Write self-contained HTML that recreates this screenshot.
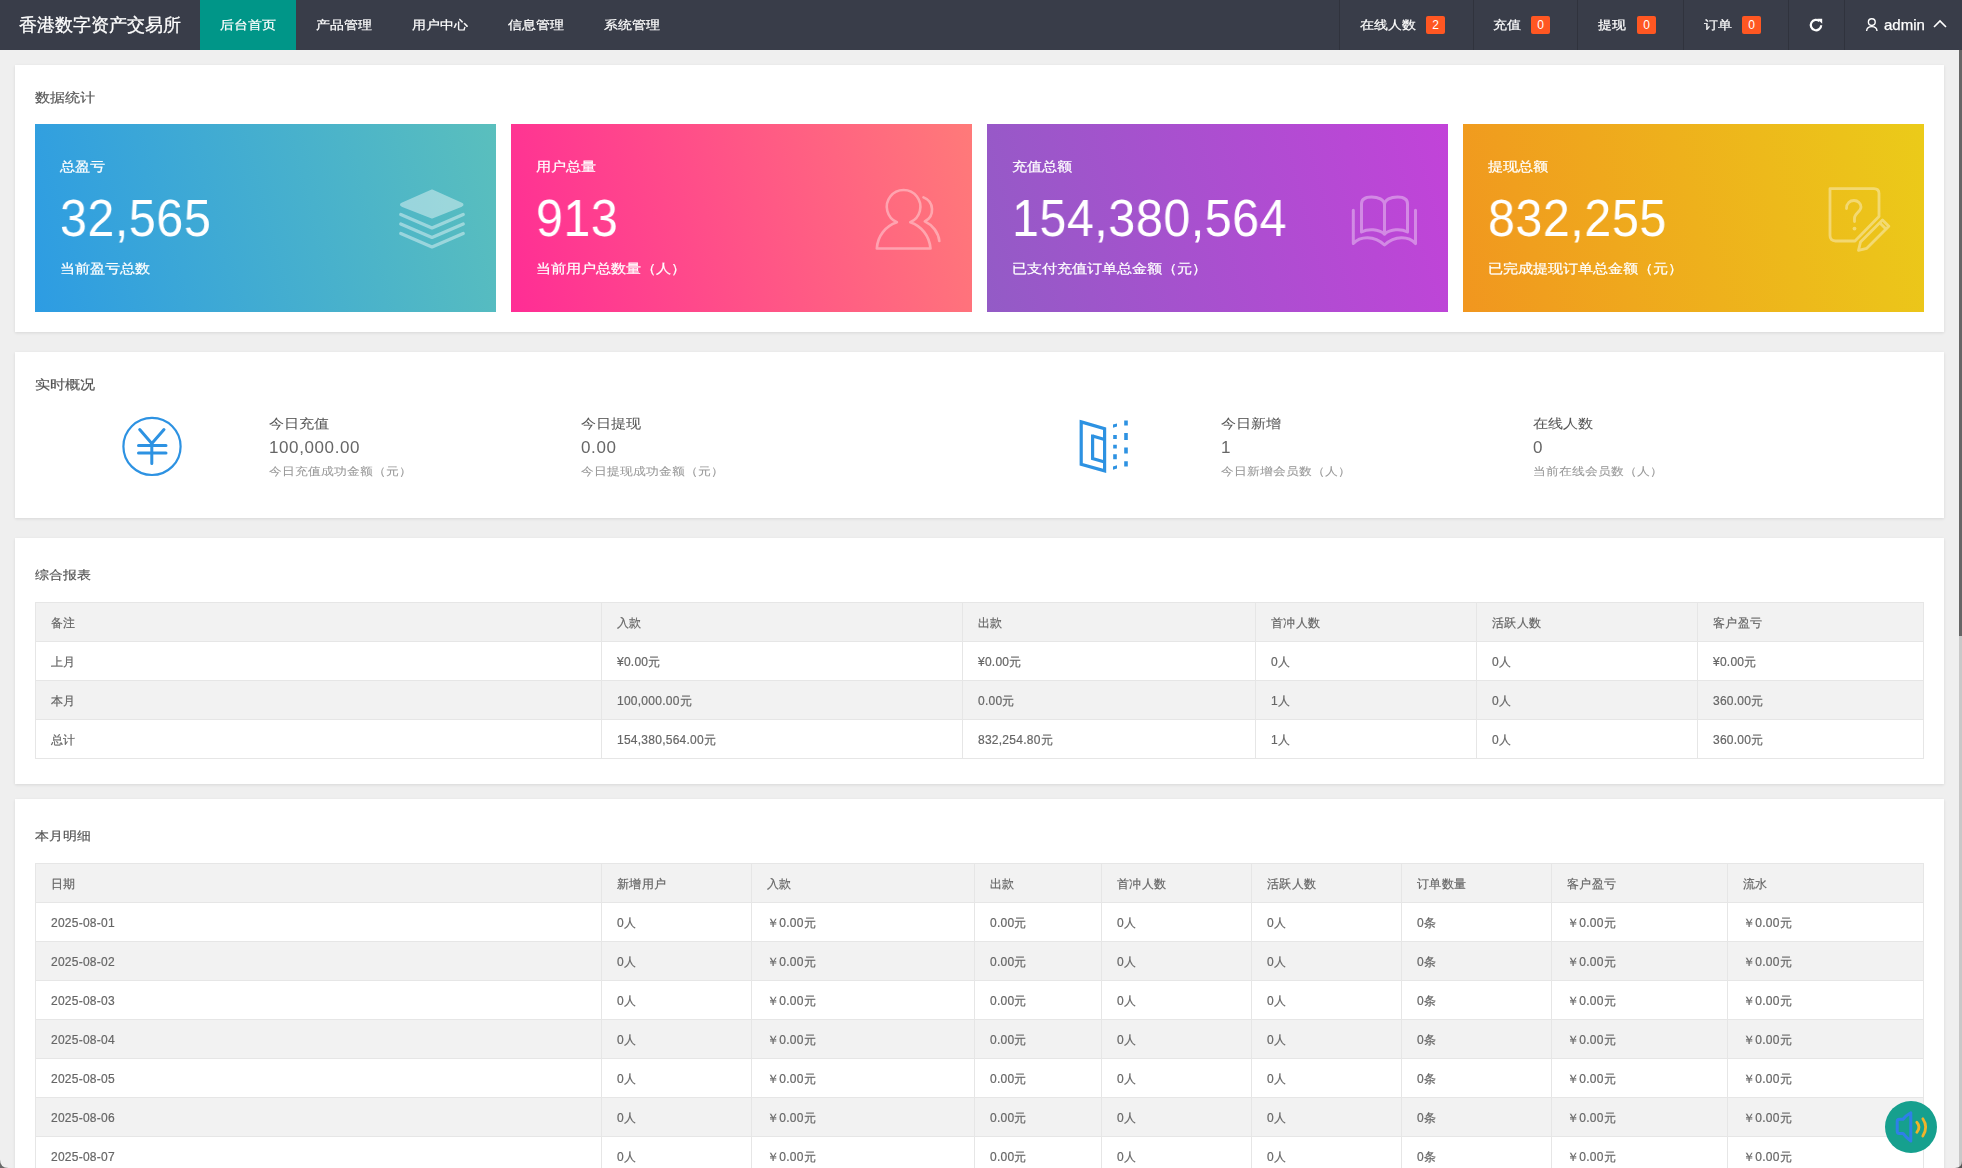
<!DOCTYPE html>
<html><head><meta charset="utf-8"><title>后台首页</title>
<style>
*{margin:0;padding:0;box-sizing:border-box}
html,body{width:1962px;height:1168px;overflow:hidden;background:#efefef;-webkit-font-smoothing:antialiased;font-family:"Liberation Sans",sans-serif;color:#666}
.abs{position:absolute}
.t{position:absolute;white-space:nowrap;will-change:transform}
.sy{transform:scaleY(.86);will-change:auto;filter:grayscale(1)}
/* header */
#hd{position:absolute;left:0;top:0;width:1962px;height:50px;background:#393D49}
#logo{left:19px;top:14px;font-size:18px;line-height:22px;color:#fff;-webkit-text-stroke:.3px #fff}
.nav{top:0;height:50px;line-height:50px;font-size:14px;color:#fff;text-align:center;-webkit-text-stroke:0.25px #fff}
.nav.on{background:#009688}
.sep{position:absolute;top:0;width:1px;height:50px;background:#30333d}
.bdg{position:absolute;top:16px;width:19px;height:18px;line-height:18px;background:#FF5722;color:#fff;font-size:12px;text-align:center;border-radius:2px}
/* cards */
.card{position:absolute;left:15px;width:1929px;overflow:hidden;background:#fff;box-shadow:0 1px 3px 0 rgba(0,0,0,.1)}
.ctitle{font-size:15px;line-height:18px;color:#555;-webkit-text-stroke:.2px #555}
.stat{position:absolute;top:59px;width:461px;height:188px;color:#fff}
.stat .a{left:25px;top:35px;font-size:15px;line-height:16px;-webkit-text-stroke:.25px #fff}
.stat .n{left:25px;top:66px;font-size:52px;line-height:56px;letter-spacing:.6px;transform:scaleX(.93);transform-origin:0 0}
.stat .b{left:25px;top:137px;font-size:15px;line-height:16px;-webkit-text-stroke:.25px #fff}
.stat svg{position:absolute}
/* realtime */
.rt1{font-size:15px;line-height:18px;color:#555;-webkit-text-stroke:.05px #555}
.rt2{font-size:17px;line-height:20px;color:#666;letter-spacing:.6px}
.rt3{font-size:13px;line-height:16px;color:#999;-webkit-text-stroke:.1px #999}
/* tables */
table{position:absolute;left:20px;will-change:transform;-webkit-text-stroke:.2px #666;border-collapse:collapse;table-layout:fixed;font-size:12px;letter-spacing:.25px;color:#666}
td,th{height:39px;border:1px solid #e6e6e6;padding:2px 15px 0;text-align:left;font-weight:normal;white-space:nowrap;overflow:hidden}
thead tr{background:#f2f2f2}
th span{display:inline-block}
tbody tr:nth-child(even){background:#f2f2f2}
</style></head>
<body>
<div id="hd">
  <div class="t" id="logo">香港数字资产交易所</div>
  <div class="abs" style="left:200px;top:0;width:96px;height:50px;background:#009688"></div><div class="t nav sy" style="left:200px;width:96px">后台首页</div>
  <div class="t nav sy" style="left:296px;width:96px">产品管理</div>
  <div class="t nav sy" style="left:392px;width:96px">用户中心</div>
  <div class="t nav sy" style="left:488px;width:96px">信息管理</div>
  <div class="t nav sy" style="left:584px;width:96px">系统管理</div>

  <div class="sep" style="left:1339px"></div>
  <div class="t nav sy" style="left:1360px">在线人数</div><div class="bdg" style="left:1426px">2</div>
  <div class="sep" style="left:1473px"></div>
  <div class="t nav sy" style="left:1493px">充值</div><div class="bdg" style="left:1531px">0</div>
  <div class="sep" style="left:1577px"></div>
  <div class="t nav sy" style="left:1598px">提现</div><div class="bdg" style="left:1637px">0</div>
  <div class="sep" style="left:1683px"></div>
  <div class="t nav sy" style="left:1704px">订单</div><div class="bdg" style="left:1742px">0</div>
  <div class="sep" style="left:1788px"></div>
  <svg class="abs" style="left:1808px;top:17px" width="16" height="16" viewBox="0 0 16 16"><path d="M13.2 8.2A5.2 5.2 0 1 1 11.6 4.3" fill="none" stroke="#fff" stroke-width="2.2"/><path d="M9.2 1.8 L14.2 1.8 L14.2 6.8 Z" fill="#fff"/></svg>
  <div class="sep" style="left:1844px"></div>
  <svg class="abs" style="left:1865px;top:17px" width="14" height="15" viewBox="0 0 14 15"><circle cx="6.8" cy="5.1" r="3.4" fill="none" stroke="#fff" stroke-width="1.4"/><path d="M1.6 14 C1.8 10.8 4 9.6 6.8 9.6 C9.6 9.6 11.8 10.8 12 14" fill="none" stroke="#fff" stroke-width="1.4"/></svg>
  <div class="t nav" style="left:1884px;font-size:15px">admin</div>
  <svg class="abs" style="left:1933px;top:19px" width="14" height="10" viewBox="0 0 14 10"><path d="M1 8 L7 2 L13 8" fill="none" stroke="#fff" stroke-width="1.6"/></svg>
</div>
<div class="abs" style="left:1959px;top:50px;width:3px;height:1118px;background:#c8c8c8"></div>
<div class="abs" style="left:1959px;top:50px;width:3px;height:586px;background:#666"></div>

<!-- card 1 -->
<div class="card" style="top:65px;height:267px">
  <div class="t ctitle sy" style="left:20px;top:24px">数据统计</div>
  <div class="stat" style="left:20px;background:linear-gradient(75deg,#2d9ce3,#5abfbd)">
    <div class="t a sy">总盈亏</div>
    <div class="t n">32,565</div>
    <div class="t b sy">当前盈亏总数</div>
    <svg style="left:364px;top:64px" width="68" height="62" viewBox="0 0 68 62">
      <g opacity=".42" fill="none" stroke="#fff" stroke-linecap="round" stroke-linejoin="round">
      <path d="M33 2.5 L62.5 15.7 Q64.5 16.7 62.5 17.7 L33 29.5 L3 17.7 Q1 16.7 3 15.7 Z" fill="#fff" stroke-width="2"/>
      <path d="M1.8 26.5 L33 40 L64.2 26.5 M1.8 36 L33 49.5 L64.2 36 M1.8 45.5 L33 59 L64.2 45.5" stroke-width="3.2"/></g>
    </svg>
  </div>
  <div class="stat" style="left:496px;background:linear-gradient(75deg,#ff2d95,#ff7a79)">
    <div class="t a sy">用户总量</div>
    <div class="t n">913</div>
    <div class="t b sy">当前用户总数量（人）</div>
    <svg style="left:364px;top:64px" width="68" height="64" viewBox="0 0 68 64" fill="none" stroke="#fff" stroke-width="2.6" stroke-linejoin="round" stroke-linecap="round" opacity=".38">
      <path d="M21.9 34.2 A16.8 16.8 0 1 1 35.3 34.2 C46.5 38 54.5 48 55.5 60.5 L1.8 60.5 C2.6 48 10.5 38 21.9 34.2 Z"/>
      <path d="M48.5 9.4 A13.1 13.1 0 0 1 49.8 33.4 C57.5 37 63.5 44.5 64.3 53"/>
    </svg>
  </div>
  <div class="stat" style="left:972px;background:linear-gradient(75deg,#935bc6,#c243d9)">
    <div class="t a sy">充值总额</div>
    <div class="t n">154,380,564</div>
    <div class="t b sy">已支付充值订单总金额（元）</div>
    <svg style="left:363px;top:70px" width="70" height="56" viewBox="0 0 70 56" fill="none" stroke="#fff" stroke-width="3" stroke-linecap="round" stroke-linejoin="round" opacity=".36">
      <path d="M3.3 16.2 L3.3 49.6 C10 42 24 41 34.5 51 C45 41 59 42 65.5 49.6 L65.5 16.2"/>
      <path d="M11.5 38 L11.5 10 C11.5 5.5 15 3 21.5 3 C28 3 34.5 5.5 34.5 11 L34.5 40 C28.5 35 18 34.5 11.5 38 Z"/>
      <path d="M57.5 38 L57.5 10 C57.5 5.5 54 3 47.5 3 C41 3 34.5 5.5 34.5 11 L34.5 40 C40.5 35 51 34.5 57.5 38 Z"/>
    </svg>
  </div>
  <div class="stat" style="left:1448px;background:linear-gradient(75deg,#f1961f,#ebcb19)">
    <div class="t a sy">提现总额</div>
    <div class="t n">832,255</div>
    <div class="t b sy">已完成提现订单总金额（元）</div>
    <svg style="left:365px;top:62px" width="66" height="68" viewBox="0 0 66 68" fill="none" stroke="#fff" stroke-width="2.8" stroke-linejoin="round" opacity=".38">
      <path d="M2 2.6 L46 2.6 Q51 2.6 51 7.6 L51 30.5 L27 55 L7.5 55 Q2 55 2 49.5 Z"/>
      <path d="M30.5 64.4 L32.5 56 L54.5 34 L60.8 40.3 L38.8 62.3 Z"/>
      <path d="M51.7 36.8 L57.7 42.8"/>
      <path d="M18.5 22.5 C18.5 17 22 14.5 26 14.5 C30 14.5 33 17.5 33 21 C33 25.5 26.5 27.5 26.5 32 L26.5 35.5" stroke-linecap="round"/>
      <circle cx="26.5" cy="42.6" r="1.9" fill="#fff" stroke="none"/>
    </svg>
  </div>
</div>

<!-- card 2 -->
<div class="card" style="top:352px;height:166px">
  <div class="t ctitle sy" style="left:20px;top:24px">实时概况</div>
  <svg class="abs" style="left:106px;top:63px" width="62" height="62" viewBox="0 0 62 62" fill="none" stroke="#2d92e2" stroke-linecap="round" stroke-linejoin="round">
    <circle cx="31" cy="31.4" r="28.6" stroke-width="2.2"/>
    <path d="M18.7 14.6 L30.8 28.5 L43 14.6" stroke-width="3"/>
    <path d="M17.5 30.4 L45 30.4 M17.5 37.9 L45 37.9 M30.8 28.5 L30.8 48.5" stroke-width="3"/>
  </svg>
  <div class="t rt1 sy" style="left:254px;top:63px">今日充值</div>
  <div class="t rt2" style="left:254px;top:86px">100,000.00</div>
  <div class="t rt3 sy" style="left:254px;top:112px">今日充值成功金额（元）</div>
  <div class="t rt1 sy" style="left:566px;top:63px">今日提现</div>
  <div class="t rt2" style="left:566px;top:86px">0.00</div>
  <div class="t rt3 sy" style="left:566px;top:112px">今日提现成功金额（元）</div>
  <svg class="abs" style="left:1058px;top:62px" width="62" height="62" viewBox="0 0 62 62" fill="none" stroke="#2d92e2" stroke-width="3.2">
    <path d="M8.2 7.9 L31.6 14.8 L31.6 56.8 L8.2 50.4 Z" stroke-linejoin="miter"/>
    <path d="M19.6 22 L31.6 25.5 M19.6 20.5 L19.6 44.5 L31.6 48"/>
    <path d="M40 10.6 L44 9.4 L44 12.6 L40 13.8 Z" fill="#2d92e2" stroke="none"/>
    <path d="M42 21 L42 25 M42 30.7 L42 34.5 M42 40.3 L42 45.3" stroke-width="3.6"/>
    <path d="M40 52.5 L44 51.3 L44 54.5 L40 55.7 Z" fill="#2d92e2" stroke="none"/>
    <path d="M53 6.4 L53 11.4 M53 19.1 L53 26 M53 33.4 L53 39.5 M53 47.2 L53 52.6" stroke-width="3.6"/>
  </svg>
  <div class="t rt1 sy" style="left:1206px;top:63px">今日新增</div>
  <div class="t rt2" style="left:1206px;top:86px">1</div>
  <div class="t rt3 sy" style="left:1206px;top:112px">今日新增会员数（人）</div>
  <div class="t rt1 sy" style="left:1518px;top:63px">在线人数</div>
  <div class="t rt2" style="left:1518px;top:86px">0</div>
  <div class="t rt3 sy" style="left:1518px;top:112px">当前在线会员数（人）</div>
</div>

<!-- card 3 -->
<div class="card" style="top:538px;height:246px">
  <div class="t ctitle sy" style="left:20px;top:28px;font-size:14px">综合报表</div>
  <table style="top:64px;width:1888px">
    <colgroup><col style="width:566px"><col style="width:361px"><col style="width:293px"><col style="width:221px"><col style="width:221px"><col style="width:226px"></colgroup>
    <thead><tr><th><span>备注</span></th><th><span>入款</span></th><th><span>出款</span></th><th><span>首冲人数</span></th><th><span>活跃人数</span></th><th><span>客户盈亏</span></th></tr></thead>
    <tbody>
      <tr><td>上月</td><td>¥0.00元</td><td>¥0.00元</td><td>0人</td><td>0人</td><td>¥0.00元</td></tr>
      <tr><td>本月</td><td>100,000.00元</td><td>0.00元</td><td>1人</td><td>0人</td><td>360.00元</td></tr>
      <tr><td>总计</td><td>154,380,564.00元</td><td>832,254.80元</td><td>1人</td><td>0人</td><td>360.00元</td></tr>
    </tbody>
  </table>
</div>

<!-- card 4 -->
<div class="card" style="top:799px;height:560px">
  <div class="t ctitle sy" style="left:20px;top:28px;font-size:14px">本月明细</div>
  <table style="top:64px;width:1888px">
    <colgroup><col style="width:566px"><col style="width:150px"><col style="width:223px"><col style="width:127px"><col style="width:150px"><col style="width:150px"><col style="width:150px"><col style="width:176px"><col style="width:196px"></colgroup>
    <thead><tr><th><span>日期</span></th><th><span>新增用户</span></th><th><span>入款</span></th><th><span>出款</span></th><th><span>首冲人数</span></th><th><span>活跃人数</span></th><th><span>订单数量</span></th><th><span>客户盈亏</span></th><th><span>流水</span></th></tr></thead>
    <tbody>
      <tr><td>2025-08-01</td><td>0人</td><td>￥0.00元</td><td>0.00元</td><td>0人</td><td>0人</td><td>0条</td><td>￥0.00元</td><td>￥0.00元</td></tr>
      <tr><td>2025-08-02</td><td>0人</td><td>￥0.00元</td><td>0.00元</td><td>0人</td><td>0人</td><td>0条</td><td>￥0.00元</td><td>￥0.00元</td></tr>
      <tr><td>2025-08-03</td><td>0人</td><td>￥0.00元</td><td>0.00元</td><td>0人</td><td>0人</td><td>0条</td><td>￥0.00元</td><td>￥0.00元</td></tr>
      <tr><td>2025-08-04</td><td>0人</td><td>￥0.00元</td><td>0.00元</td><td>0人</td><td>0人</td><td>0条</td><td>￥0.00元</td><td>￥0.00元</td></tr>
      <tr><td>2025-08-05</td><td>0人</td><td>￥0.00元</td><td>0.00元</td><td>0人</td><td>0人</td><td>0条</td><td>￥0.00元</td><td>￥0.00元</td></tr>
      <tr><td>2025-08-06</td><td>0人</td><td>￥0.00元</td><td>0.00元</td><td>0人</td><td>0人</td><td>0条</td><td>￥0.00元</td><td>￥0.00元</td></tr>
      <tr><td>2025-08-07</td><td>0人</td><td>￥0.00元</td><td>0.00元</td><td>0人</td><td>0人</td><td>0条</td><td>￥0.00元</td><td>￥0.00元</td></tr>
      <tr><td>2025-08-08</td><td>0人</td><td>￥0.00元</td><td>0.00元</td><td>0人</td><td>0人</td><td>0条</td><td>￥0.00元</td><td>￥0.00元</td></tr>
      <tr><td>2025-08-09</td><td>0人</td><td>￥0.00元</td><td>0.00元</td><td>0人</td><td>0人</td><td>0条</td><td>￥0.00元</td><td>￥0.00元</td></tr>
      <tr><td>2025-08-10</td><td>0人</td><td>￥0.00元</td><td>0.00元</td><td>0人</td><td>0人</td><td>0条</td><td>￥0.00元</td><td>￥0.00元</td></tr>
      <tr><td>2025-08-11</td><td>0人</td><td>￥0.00元</td><td>0.00元</td><td>0人</td><td>0人</td><td>0条</td><td>￥0.00元</td><td>￥0.00元</td></tr>
    </tbody>
  </table>
</div>

<svg class="abs" style="left:1885px;top:1101px" width="52" height="52" viewBox="0 0 52 52">
  <circle cx="26" cy="26" r="26" fill="#16a08e"/>
  <path d="M25.8 11.8 Q21 14.5 18 18.3 L14.3 18.3 Q12.2 18.3 12.2 20.5 L12.2 30.3 Q12.2 32.4 14.3 32.4 L18 32.4 Q21 36.5 25.8 40 Z" fill="none" stroke="#2f7fe8" stroke-width="3" stroke-linejoin="round"/>
  <path d="M31.8 21.3 Q36.2 26.2 31.8 31.3" fill="none" stroke="#f0b32a" stroke-width="2.8" stroke-linecap="round"/>
  <path d="M37.8 17.8 Q43.6 26.2 37.8 35" fill="none" stroke="#f0b32a" stroke-width="2.8" stroke-linecap="round"/>
</svg>
<svg class="abs" style="left:0;top:1158px" width="10" height="10" viewBox="0 0 10 10"><path d="M0 1.5 Q0 10 8.5 10 L0 10 Z" fill="#6a6a6a"/></svg>
<svg class="abs" style="left:1952px;top:1158px" width="10" height="10" viewBox="0 0 10 10"><path d="M10 3 Q10 10 3 10 L10 10 Z" fill="#555"/></svg>
</body></html>
